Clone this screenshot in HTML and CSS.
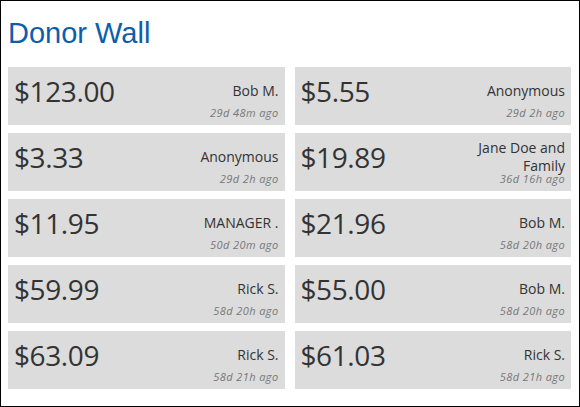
FILE: index.html
```html
<!DOCTYPE html>
<html>
<head>
<meta charset="utf-8">
<link rel="stylesheet" href="styles.css">
</head>
<body>
<div class="page">
  <h1 class="title">Donor Wall</h1>
  <div class="wall">
    <div class="card"><div class="amount">$123.00</div><div class="name">Bob M.</div><div class="time">29d 48m ago</div></div>
    <div class="card"><div class="amount">$5.55</div><div class="name">Anonymous</div><div class="time">29d 2h ago</div></div>
    <div class="card"><div class="amount">$3.33</div><div class="name">Anonymous</div><div class="time">29d 2h ago</div></div>
    <div class="card"><div class="amount">$19.89</div><div class="name">Jane Doe and Family</div><div class="time">36d 16h ago</div></div>
    <div class="card"><div class="amount">$11.95</div><div class="name">MANAGER .</div><div class="time">50d 20m ago</div></div>
    <div class="card"><div class="amount">$21.96</div><div class="name">Bob M.</div><div class="time">58d 20h ago</div></div>
    <div class="card"><div class="amount">$59.99</div><div class="name">Rick S.</div><div class="time">58d 20h ago</div></div>
    <div class="card"><div class="amount">$55.00</div><div class="name">Bob M.</div><div class="time">58d 20h ago</div></div>
    <div class="card"><div class="amount">$63.09</div><div class="name">Rick S.</div><div class="time">58d 21h ago</div></div>
    <div class="card"><div class="amount">$61.03</div><div class="name">Rick S.</div><div class="time">58d 21h ago</div></div>
  </div>
</div>
</body>
</html>
```
FILE: styles.css
```css
html, body {
  margin: 0;
  padding: 0;
  background: #fff;
}
.page {
  box-sizing: border-box;
  width: 580px;
  height: 407px;
  border: 1px solid #000;
  padding: 7px 8px 7px 7px;
  font-family: "Open Sans", "Noto Sans", sans-serif;
  color: #333;
}
.title {
  margin: 9px 0 17px 0;
  font-family: "Liberation Sans", Arial, sans-serif;
  font-weight: normal;
  font-size: 29px;
  line-height: 33px;
  color: #0b5eaf;
}
.wall {
  display: grid;
  grid-template-columns: 1fr 1fr;
  column-gap: 10px;
  row-gap: 8px;
}
.card {
  box-sizing: border-box;
  height: 58px;
  background: #dcdcdc;
  padding: 7px 6px 7px 6px;
  display: grid;
  grid-template-columns: 1fr 92px;
  grid-template-rows: minmax(0, 1fr) 11px;
}
.amount {
  grid-column: 1;
  grid-row: 1;
  align-self: center;
  font-size: 28px;
  letter-spacing: -0.4px;
  line-height: 38px;
  color: #333;
  white-space: nowrap;
}
.name {
  grid-column: 2;
  grid-row: 1;
  align-self: center;
  text-align: right;
  font-size: 14px;
  line-height: 17.5px;
  color: #333;
}
.time {
  grid-column: 2;
  grid-row: 2;
  text-align: right;
  font-size: 11px;
  line-height: 11px;
  letter-spacing: 0.4px;
  font-style: italic;
  color: #777;
  white-space: nowrap;
}
```
